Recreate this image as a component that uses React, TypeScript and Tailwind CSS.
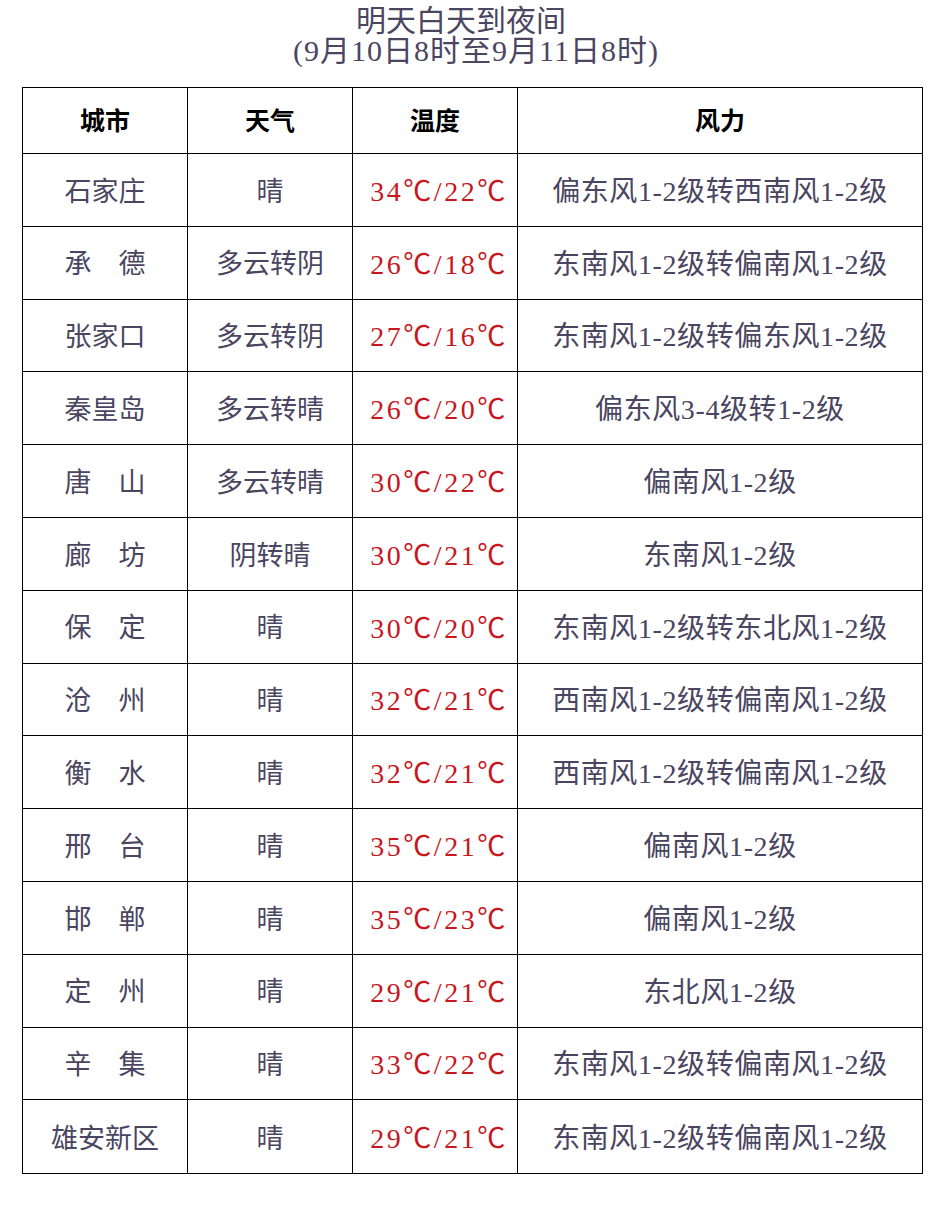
const rows = [
  ["石家庄", "晴", "34℃/22℃", "偏东风1-2级转西南风1-2级"],
  ["承\u3000德", "多云转阴", "26℃/18℃", "东南风1-2级转偏南风1-2级"],
  ["张家口", "多云转阴", "27℃/16℃", "东南风1-2级转偏东风1-2级"],
  ["秦皇岛", "多云转晴", "26℃/20℃", "偏东风3-4级转1-2级"],
  ["唐\u3000山", "多云转晴", "30℃/22℃", "偏南风1-2级"],
  ["廊\u3000坊", "阴转晴", "30℃/21℃", "东南风1-2级"],
  ["保\u3000定", "晴", "30℃/20℃", "东南风1-2级转东北风1-2级"],
  ["沧\u3000州", "晴", "32℃/21℃", "西南风1-2级转偏南风1-2级"],
  ["衡\u3000水", "晴", "32℃/21℃", "西南风1-2级转偏南风1-2级"],
  ["邢\u3000台", "晴", "35℃/21℃", "偏南风1-2级"],
  ["邯\u3000郸", "晴", "35℃/23℃", "偏南风1-2级"],
  ["定\u3000州", "晴", "29℃/21℃", "东北风1-2级"],
  ["辛\u3000集", "晴", "33℃/22℃", "东南风1-2级转偏南风1-2级"],
  ["雄安新区", "晴", "29℃/21℃", "东南风1-2级转偏南风1-2级"],
];

const font = { fontFamily: '"Liberation Serif", "Noto Sans CJK SC", serif' };

export default function App() {
  return (
    <div className="w-[942px] h-[1218px] bg-white" style={font}>
      <div className="pt-[6px] text-center text-[#4a4560] text-[30px] leading-[30px]">
        <div className="pr-[20px]">明天白天到夜间</div>
        <div className="pl-[10px] tracking-[1px]">(9月10日8时至9月11日8时)</div>
      </div>
      <div className="mt-[21px] ml-[22px] w-[901px] border border-black">
        <div className="grid grid-cols-[165px_165px_165px_1fr] h-[66px] border-b border-black text-black font-bold text-[25px]">
          <div className="flex items-center justify-center border-r border-black pt-[3px]">城市</div>
          <div className="flex items-center justify-center border-r border-black pt-[3px]">天气</div>
          <div className="flex items-center justify-center border-r border-black pt-[3px]">温度</div>
          <div className="flex items-center justify-center pt-[3px]">风力</div>
        </div>
        {rows.map((r, i) => (
          <div
            key={i}
            className={`grid grid-cols-[165px_165px_165px_1fr] h-[72.8px] text-[27px] text-[#4a4560] ${i < rows.length - 1 ? "border-b border-black" : ""}`}
          >
            <div className="flex items-center justify-center border-r border-black pt-[4px]">{r[0]}</div>
            <div className="flex items-center justify-center border-r border-black pt-[4px]">{r[1]}</div>
            <div className="flex items-center justify-center border-r border-black pt-[4px] pl-[8px] text-[28px] text-[#c8161d] tracking-[2.5px]">{r[2]}</div>
            <div className="flex items-center justify-center pt-[4px] text-[28px] tracking-[0.6px]">{r[3]}</div>
          </div>
        ))}
      </div>
    </div>
  );
}
